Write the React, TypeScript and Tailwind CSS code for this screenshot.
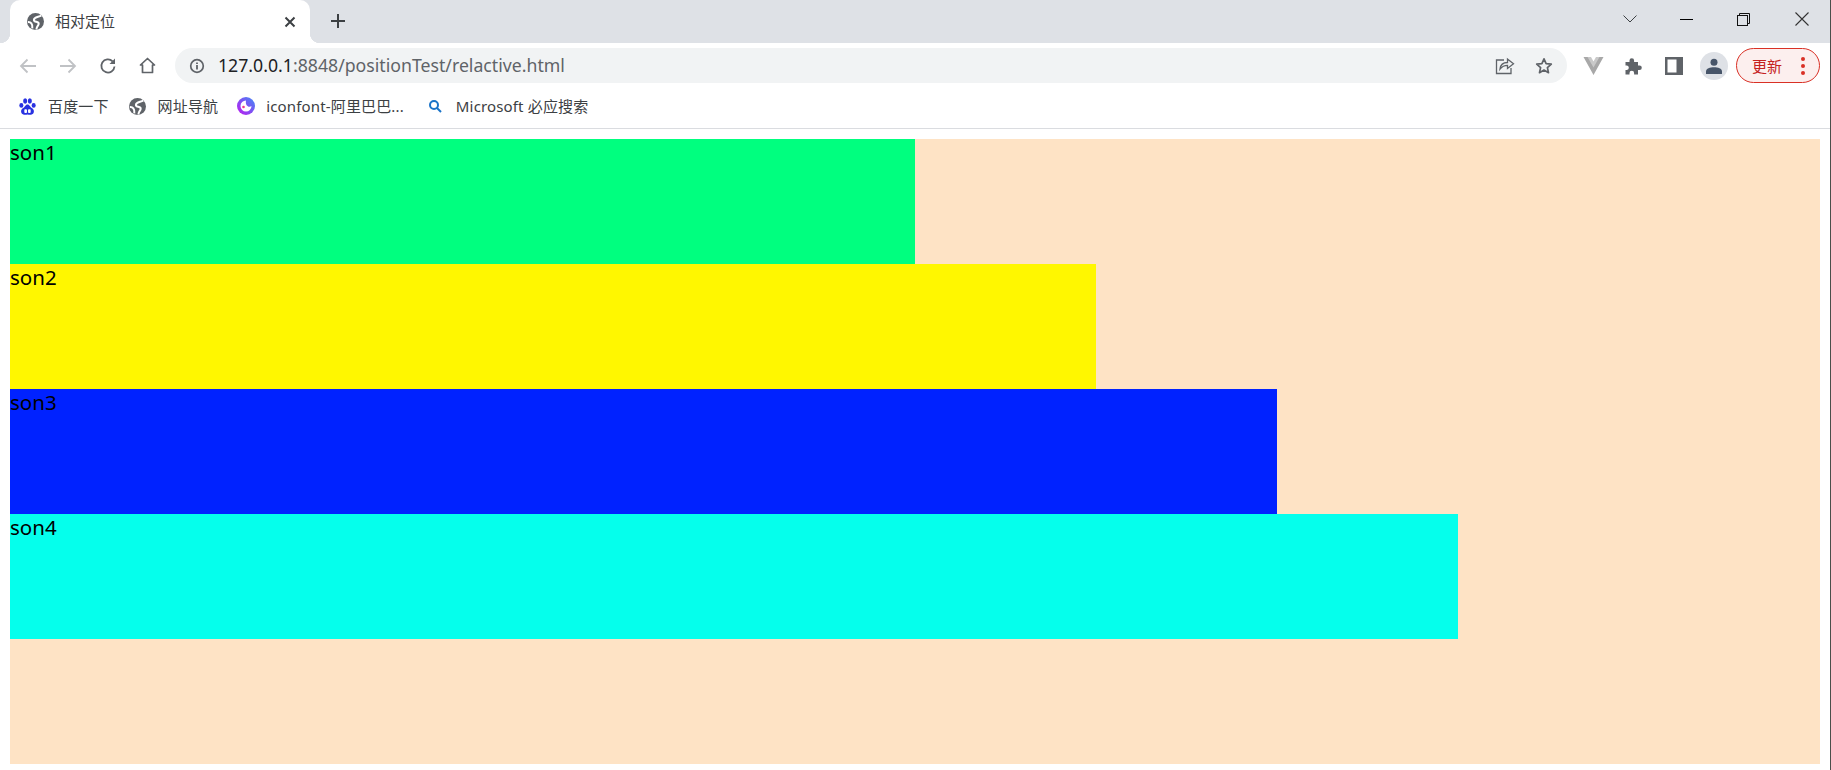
import type { ReactNode } from "react";

const Globe = () => (
  <svg width="17" height="17" viewBox="0 0 16 16" className="shrink-0">
    <circle cx="8" cy="8" r="8" fill="#5f6368" />
    <path d="M13.500 2.500C10 4 6.500 3.800 6.500 6.500 6.500 9 11 7.500 11 10 11 11.800 9 12.500 8.800 15.500" fill="none" stroke="#fff" strokeWidth="1.900" />
    <path d="M.8 8.500C3.500 8.300 5.500 10 5 14.500" fill="none" stroke="#fff" strokeWidth="1.900" />
  </svg>
);

const Bookmark = ({ icon, label, className }: { icon: ReactNode; label: string; className: string }) => (
  <div className={`flex items-center ${className}`}>
    <div className="flex w-[17px] h-[17px] items-center justify-center shrink-0">{icon}</div>
    <span className="ml-[12px] text-[15px] tracking-[0.15px] leading-5 text-[#3c4043] whitespace-nowrap">{label}</span>
  </div>
);

const Son = ({ label, className }: { label: string; className: string }) => (
  <div className={`h-[125px] text-[20.5px] leading-[26px] text-black ${className}`}>{label}</div>
);

export default function App() {
  return (
    <div className="w-[1831px] h-[770px] overflow-hidden bg-white border-r border-[#4a4f4a] font-['Noto_Sans','Noto_Sans_CJK_SC',sans-serif] flex flex-col">
      <div className="h-[43px] bg-[#dee1e6] flex items-end relative shrink-0">
        <div className="ml-[10px] w-[300px] h-[43px] bg-white rounded-t-[10px] flex items-center pl-[17px] relative">
          <Globe />
          <span className="ml-[11px] text-[15px] text-[#3c4043]">相对定位</span>
          <svg width="12" height="12" viewBox="0 0 12 12" className="ml-auto mr-[14px]" stroke="#3c4043" strokeWidth="2" fill="none">
            <path d="M1.500 1.500 10.500 10.500M10.500 1.500 1.500 10.500" />
          </svg>
          <div className="absolute -left-[10px] bottom-0 w-[10px] h-[10px] bg-[radial-gradient(circle_at_0_0,#dee1e6_10px,#fff_10.5px)]" />
          <div className="absolute -right-[10px] bottom-0 w-[10px] h-[10px] bg-[radial-gradient(circle_at_100%_0,#dee1e6_10px,#fff_10.5px)]" />
        </div>
        <svg width="14" height="14" viewBox="0 0 14 14" className="ml-[21px] mb-[15px]" stroke="#3c4043" strokeWidth="2" fill="none">
          <path d="M7 0V14M0 7H14" />
        </svg>
        <div className="ml-auto h-full flex items-center">
          <svg width="14" height="8" viewBox="0 0 14 8" className="mr-[43px] mt-[-5px]" stroke="#3c4043" strokeWidth="1" fill="none">
            <path d="M.5.5 7 7 13.500.5" />
          </svg>
          <div className="w-[13px] h-px bg-black mr-[44px] mt-[-5px]" />
          <svg width="13" height="13" viewBox="0 0 13 13" className="mr-[45px] mt-[-5px]" stroke="#111" strokeWidth="1" fill="none">
            <rect x=".5" y="2.500" width="10" height="10" />
            <path d="M2.500 2.500V.5H12.500V10.500H10.500" />
          </svg>
          <svg width="14" height="14" viewBox="0 0 14 14" className="mr-[21px] mt-[-5px]" stroke="#333" strokeWidth="1.100" fill="none">
            <path d="M.5.5 13.500 13.500M13.500.5 .5 13.500" />
          </svg>
        </div>
      </div>

      <div className="h-[45px] bg-white flex items-center shrink-0 pl-[19px]">
        <svg width="18" height="18" viewBox="0 0 18 18" stroke="#c0c2c5" strokeWidth="1.800" fill="none">
          <path d="M17 9H2M8.500 2.500 2 9l6.500 6.500" />
        </svg>
        <svg width="18" height="18" viewBox="0 0 18 18" className="ml-[22px]" stroke="#c0c2c5" strokeWidth="1.800" fill="none">
          <path d="M1 9H16M9.500 2.500 16 9l-6.500 6.500" />
        </svg>
        <svg width="18" height="18" viewBox="0 0 18 18" className="ml-[22px]" fill="none">
          <path d="M15.500 9.500A6.600 6.600 0 1 1 13.600 4.300" stroke="#5f6368" strokeWidth="1.800" />
          <path d="M16 1.500V7H10.500Z" fill="#5f6368" />
        </svg>
        <svg width="17" height="17" viewBox="0 0 16 17" className="ml-[22px]" stroke="#5f6368" strokeWidth="1.700" fill="none" strokeLinejoin="round">
          <path d="M8 1.500 15 8H13V15.500H3V8H1Z" />
        </svg>
        <div className="ml-[19px] h-[35px] w-[1392px] rounded-full bg-[#f1f3f4] flex items-center pl-[14px] pr-[14px]">
          <svg width="16" height="16" viewBox="0 0 16 16" fill="none">
            <circle cx="8" cy="8" r="6.300" stroke="#5f6368" strokeWidth="1.700" />
            <path d="M8 7V11.500M8 4.500V6" stroke="#5f6368" strokeWidth="1.800" />
          </svg>
          <span className="ml-[13px] mt-[-1px] text-[17.7px] leading-6 whitespace-nowrap text-[#5f6368]">
            <span className="text-[#202124]">127.0.0.1</span>:8848/positionTest/relactive.html
          </span>
          <svg width="20" height="18" viewBox="0 0 20 18" className="ml-auto" stroke="#5f6368" strokeWidth="1.300" fill="none">
            <path d="M9 3H1.500V16.500H16V11M5 12C5.500 8 8.500 5.500 12.500 5.500V2L18.500 6.800 12.500 11.500V8.300C9 8.300 7 9.500 5 12Z" />
          </svg>
          <svg width="18" height="18" viewBox="0 0 18 18" className="ml-[20px]" stroke="#5f6368" strokeWidth="1.700" fill="none" strokeLinejoin="round">
            <path d="M9 1.800 11.100 6.600 16.300 7.100 12.400 10.600 13.500 15.700 9 13.100 4.500 15.700 5.600 10.600 1.700 7.100 6.900 6.600Z" />
          </svg>
        </div>
        <svg width="21" height="18" viewBox="0 0 20 18" className="ml-[16px]">
          <path d="M0 0H6.500L10 6 13.500 0H20L10 18Z" fill="#a8a8a8" />
          <path d="M4 0H7.500L10 4.500 12.500 0H16L10 10.500Z" fill="#c9c9c9" />
        </svg>
        <svg width="19" height="18" viewBox="0 0 18 18" className="ml-[20px]" fill="#5f6368">
          <path d="M1 5H5V3.500A2.300 2.300 0 0 1 9.600 3.500V5H13.500V8.500H15A2.300 2.300 0 0 1 15 13.100H13.500V17.500H9.600V16A2.300 2.300 0 0 0 5 16V17.500H1V13H2.500A2.300 2.300 0 0 0 2.500 8.500H1Z" />
        </svg>
        <svg width="18" height="18" viewBox="0 0 18 18" className="ml-[22px]">
          <rect width="18" height="18" fill="#5f6368" />
          <rect x="2.500" y="2.500" width="9" height="13" fill="#fff" />
        </svg>
        <div className="ml-[17px] w-[28px] h-[28px] rounded-full bg-[#dee1e6] flex items-center justify-center">
          <svg width="16" height="16" viewBox="0 0 16 16" fill="#475569">
            <circle cx="8" cy="4.200" r="3.500" />
            <path d="M0 16V13.500C0 10.500 4 9.300 8 9.300S16 10.500 16 13.500V16Z" />
          </svg>
        </div>
        <div className="ml-[8px] w-[84px] h-[35px] rounded-full border border-[#d93025] bg-[#fcefee] flex items-center pl-[15px]">
          <span className="text-[15px] leading-5 text-[#c5221f]">更新</span>
          <div className="ml-[19px] flex flex-col gap-[3px]">
            <div className="w-1 h-1 rounded-full bg-[#d93025]" />
            <div className="w-1 h-1 rounded-full bg-[#d93025]" />
            <div className="w-1 h-1 rounded-full bg-[#d93025]" />
          </div>
        </div>
      </div>

      <div className="h-[41px] bg-white flex items-center shrink-0 border-b border-[#dadce0] pl-[19px] pb-[4px]">
        <Bookmark
          className=""
          label="百度一下"
          icon={
            <svg width="17" height="17" viewBox="0 0 16 16" fill="#2932e1" className="shrink-0">
              <ellipse cx="2.200" cy="7" rx="1.900" ry="2.200" />
              <ellipse cx="5.800" cy="2.800" rx="1.900" ry="2.500" />
              <ellipse cx="10.200" cy="2.800" rx="1.900" ry="2.500" />
              <ellipse cx="13.800" cy="7" rx="1.900" ry="2.200" />
              <path d="M8 6C6 6 5.500 8.500 3.800 9.500 2.300 10.500 1.500 12 2.200 13.800 3 15.500 5 16 8 15.500 11 16 13 15.500 13.800 13.800 14.500 12 13.700 10.500 12.200 9.500 10.500 8.500 10 6 8 6Z" />
              <rect x="5" y="10.500" width="2.500" height="3.500" rx=".8" fill="#fff" />
              <rect x="8.500" y="10.500" width="2.500" height="3.500" rx=".8" fill="#fff" />
            </svg>
          }
        />
        <Bookmark className="ml-[20px]" label="网址导航" icon={<Globe />} />
        <Bookmark
          className="ml-[19px]"
          label="iconfont-阿里巴巴..."
          icon={
            <svg width="18" height="18" viewBox="0 0 18 18" className="shrink-0">
              <defs>
                <linearGradient id="g" x1="1" y1="0" x2="0" y2="1">
                  <stop offset="0" stopColor="#3f8cf5" />
                  <stop offset="1" stopColor="#c016f0" />
                </linearGradient>
              </defs>
              <circle cx="9" cy="9" r="9" fill="url(#g)" />
              <path d="M9 3.500A5.500 5.500 0 1 0 14.500 9C12 11 8 9 9 3.500Z" fill="#fff" />
              <circle cx="6.500" cy="10" r="1.300" fill="#ef3b8c" />
            </svg>
          }
        />
        <Bookmark
          className="ml-[23px]"
          label="Microsoft 必应搜索"
          icon={
            <svg width="14" height="14" viewBox="0 0 14 14" stroke="#1a73c8" strokeWidth="2" fill="none">
              <circle cx="6" cy="6" r="4" />
              <path d="M9 9 13 13" />
            </svg>
          }
        />
      </div>

      <div className="flex-1 px-[10px] pt-[10px] bg-white">
        <div className="h-[625px] bg-[#fee3c5]">
          <Son label="son1" className="w-[905px] bg-[#00ff7f]" />
          <Son label="son2" className="w-[1086px] bg-[#fff700]" />
          <Son label="son3" className="w-[1267px] bg-[#0022ff]" />
          <Son label="son4" className="w-[1448px] bg-[#05ffec]" />
        </div>
      </div>
    </div>
  );
}
